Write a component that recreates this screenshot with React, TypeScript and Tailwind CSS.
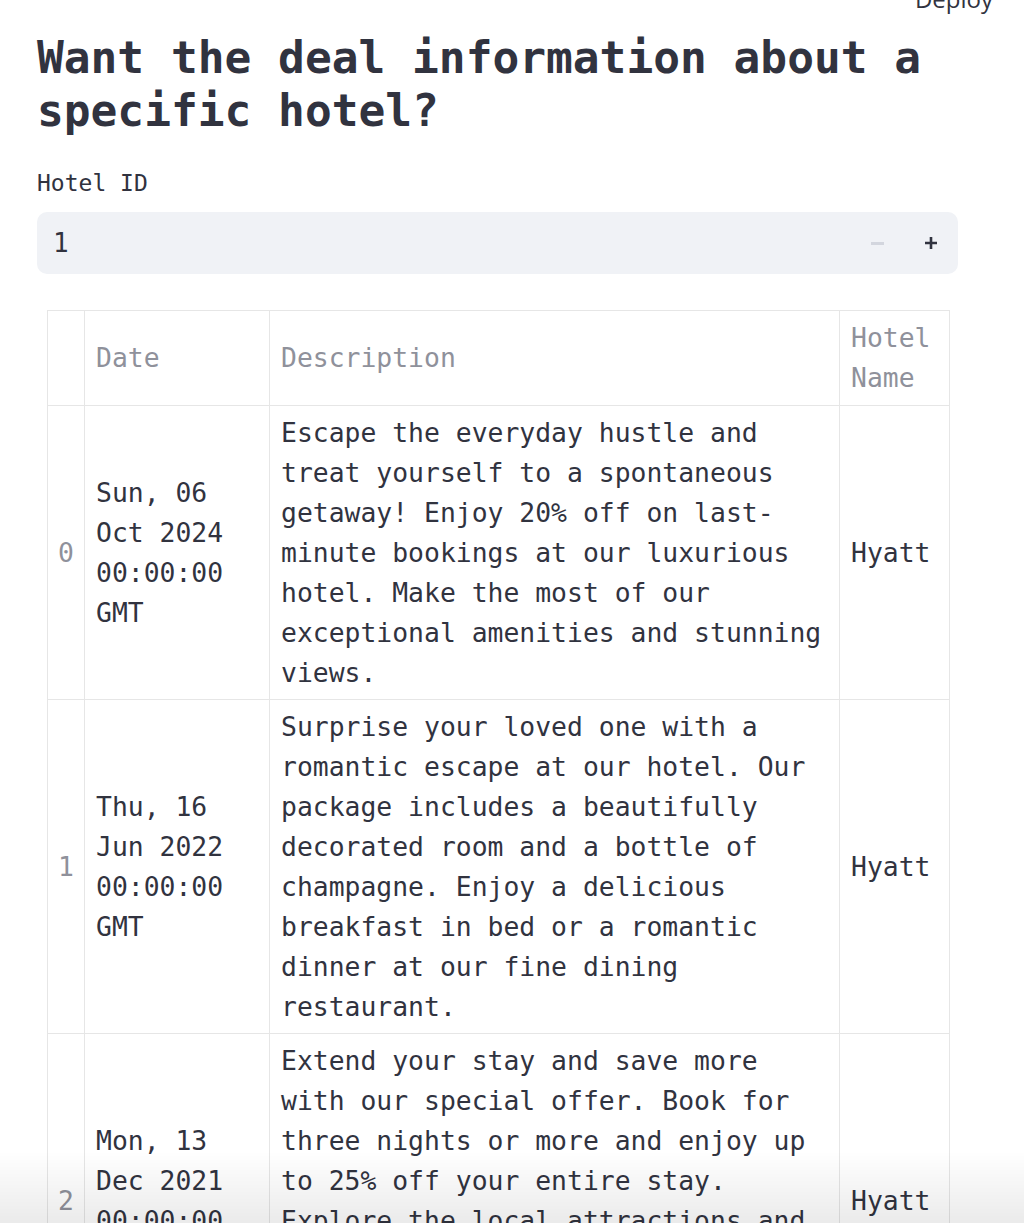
import React from 'react';

type Deal = {
  id: number;
  date: string[];
  desc: string[];
  hotel: string;
};

const MONO = { fontFamily: '"DejaVu Sans Mono", "Liberation Mono", monospace' };

const deals: Deal[] = [
  {
    id: 0,
    date: ['Sun, 06', 'Oct 2024', '00:00:00', 'GMT'],
    desc: [
      'Escape the everyday hustle and',
      'treat yourself to a spontaneous',
      'getaway! Enjoy 20% off on last-',
      'minute bookings at our luxurious',
      'hotel. Make the most of our',
      'exceptional amenities and stunning',
      'views.',
    ],
    hotel: 'Hyatt',
  },
  {
    id: 1,
    date: ['Thu, 16', 'Jun 2022', '00:00:00', 'GMT'],
    desc: [
      'Surprise your loved one with a',
      'romantic escape at our hotel. Our',
      'package includes a beautifully',
      'decorated room and a bottle of',
      'champagne. Enjoy a delicious',
      'breakfast in bed or a romantic',
      'dinner at our fine dining',
      'restaurant.',
    ],
    hotel: 'Hyatt',
  },
  {
    id: 2,
    date: ['Mon, 13', 'Dec 2021', '00:00:00', 'GMT'],
    desc: [
      'Extend your stay and save more',
      'with our special offer. Book for',
      'three nights or more and enjoy up',
      'to 25% off your entire stay.',
      'Explore the local attractions and',
      'make the most of your extended',
      'vacation with our comfortable',
      'accommodations.',
    ],
    hotel: 'Hyatt',
  },
];

function Lines({ lines }: { lines: string[] }) {
  return (
    <>
      {lines.map((l, i) => (
        <div key={i} className="whitespace-pre">
          {l}
        </div>
      ))}
    </>
  );
}

export default function App() {
  return (
    <div className="relative min-h-screen bg-white text-[#31333f]" style={MONO}>
      {/* top toolbar, mostly scrolled off */}
      <div
        className="absolute right-[31px] top-[-19px] text-[24px] text-[#31333f]"
        style={{ fontFamily: '"Open Sans", "Noto Sans", sans-serif' }}
      >
        Deploy
      </div>

      <div className="pl-[37px] pr-[66px] pt-[31px]">
        <h1 className="text-[44.5px] font-bold leading-[53px]">
          Want the deal information about a
          <br />
          specific hotel?
        </h1>

        <div className="mt-[31px] text-[23px] leading-[30px]">Hotel ID</div>

        <div className="mt-[14px] flex h-[62px] items-center rounded-[10px] bg-[#f0f2f6] pl-[16px] pr-[20px]">
          <span className="flex-1 text-[26px]">1</span>
          <span className="mr-[40px] block h-[3px] w-[13px] bg-[#d3d6de]" />
          <svg width="14" height="14" viewBox="0 0 14 14">
            <path d="M7 1v12M1 7h12" stroke="#31333f" strokeWidth="2.6" />
          </svg>
        </div>

        <div className="ml-[10px] mt-[36px] w-[903px] border border-[#e6e6e6] text-[26.4px] leading-[40px]">
          {/* header */}
          <div className="flex border-b border-[#e6e6e6] text-[#8f919b]">
            <div className="w-[37px] shrink-0 border-r border-[#e6e6e6]" />
            <div className="flex w-[185px] shrink-0 items-center border-r border-[#e6e6e6] px-[11px] py-[7px]">
              Date
            </div>
            <div className="flex w-[570px] shrink-0 items-center border-r border-[#e6e6e6] px-[11px] py-[7px]">
              Description
            </div>
            <div className="flex flex-1 items-center px-[11px] py-[7px]">
              <div>
                <div>Hotel</div>
                <div>Name</div>
              </div>
            </div>
          </div>

          {deals.map((d) => (
            <div key={d.id} className="flex border-b border-[#e6e6e6]">
              <div className="flex w-[37px] shrink-0 items-center justify-center border-r border-[#e6e6e6] text-[#8f919b]">
                {d.id}
              </div>
              <div className="flex w-[185px] shrink-0 items-center border-r border-[#e6e6e6] px-[11px] pb-[6px] pt-[7px]">
                <div>
                  <Lines lines={d.date} />
                </div>
              </div>
              <div className="w-[570px] shrink-0 border-r border-[#e6e6e6] px-[11px] pb-[6px] pt-[7px]">
                <Lines lines={d.desc} />
              </div>
              <div className="flex flex-1 items-center px-[11px]">{d.hotel}</div>
            </div>
          ))}
        </div>
        <div className="h-[60px]" />
      </div>

      {/* bottom fade of the window */}
      <div className="pointer-events-none fixed inset-x-0 bottom-0 h-[72px] bg-gradient-to-b from-transparent to-black/[0.08]" />
    </div>
  );
}
